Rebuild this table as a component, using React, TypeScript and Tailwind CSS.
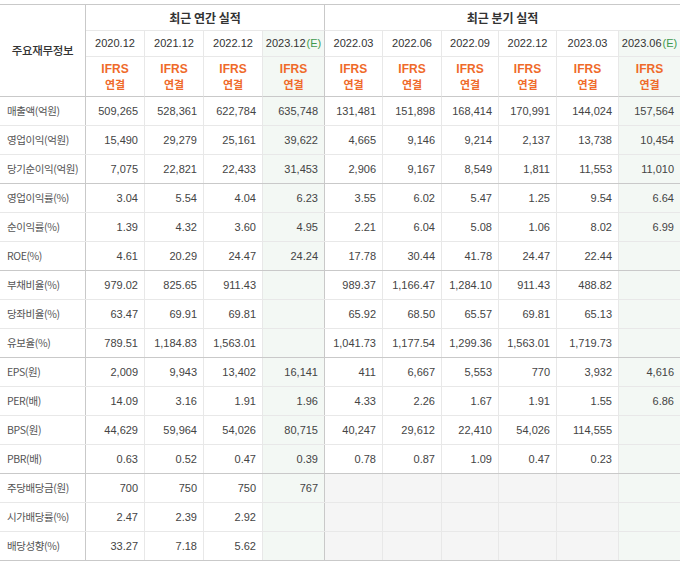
import React from "react";

const KR = "font-['Noto_Sans_CJK_KR',sans-serif]";
const NUM = "font-['Liberation_Sans','Noto_Sans_CJK_KR',sans-serif]";

// widths of the 11 columns (label + 4 annual + 6 quarterly)
const widths = [
  "w-[86px]",
  "w-[59px]",
  "w-[59px]",
  "w-[59px]",
  "w-[62px]",
  "w-[58px]",
  "w-[59px]",
  "w-[57px]",
  "w-[58px]",
  "w-[62px]",
  "w-[61px]",
];

const years = [
  "2020.12",
  "2021.12",
  "2022.12",
  "2023.12",
  "2022.03",
  "2022.06",
  "2022.09",
  "2022.12",
  "2023.03",
  "2023.06",
];

type Row = { label: string; values: string[]; groupEnd?: boolean; dividend?: boolean };

const rows: Row[] = [
  { label: "매출액(억원)", values: ["509,265", "528,361", "622,784", "635,748", "131,481", "151,898", "168,414", "170,991", "144,024", "157,564"] },
  { label: "영업이익(억원)", values: ["15,490", "29,279", "25,161", "39,622", "4,665", "9,146", "9,214", "2,137", "13,738", "10,454"] },
  { label: "당기순이익(억원)", values: ["7,075", "22,821", "22,433", "31,453", "2,906", "9,167", "8,549", "1,811", "11,553", "11,010"], groupEnd: true },
  { label: "영업이익률(%)", values: ["3.04", "5.54", "4.04", "6.23", "3.55", "6.02", "5.47", "1.25", "9.54", "6.64"] },
  { label: "순이익률(%)", values: ["1.39", "4.32", "3.60", "4.95", "2.21", "6.04", "5.08", "1.06", "8.02", "6.99"] },
  { label: "ROE(%)", values: ["4.61", "20.29", "24.47", "24.24", "17.78", "30.44", "41.78", "24.47", "22.44", ""], groupEnd: true },
  { label: "부채비율(%)", values: ["979.02", "825.65", "911.43", "", "989.37", "1,166.47", "1,284.10", "911.43", "488.82", ""] },
  { label: "당좌비율(%)", values: ["63.47", "69.91", "69.81", "", "65.92", "68.50", "65.57", "69.81", "65.13", ""] },
  { label: "유보율(%)", values: ["789.51", "1,184.83", "1,563.01", "", "1,041.73", "1,177.54", "1,299.36", "1,563.01", "1,719.73", ""], groupEnd: true },
  { label: "EPS(원)", values: ["2,009", "9,943", "13,402", "16,141", "411", "6,667", "5,553", "770", "3,932", "4,616"] },
  { label: "PER(배)", values: ["14.09", "3.16", "1.91", "1.96", "4.33", "2.26", "1.67", "1.91", "1.55", "6.86"] },
  { label: "BPS(원)", values: ["44,629", "59,964", "54,026", "80,715", "40,247", "29,612", "22,410", "54,026", "114,555", ""] },
  { label: "PBR(배)", values: ["0.63", "0.52", "0.47", "0.39", "0.78", "0.87", "1.09", "0.47", "0.23", ""], groupEnd: true },
  { label: "주당배당금(원)", values: ["700", "750", "750", "767", "", "", "", "", "", ""], dividend: true },
  { label: "시가배당률(%)", values: ["2.47", "2.39", "2.92", "", "", "", "", "", "", ""], dividend: true },
  { label: "배당성향(%)", values: ["33.27", "7.18", "5.62", "", "", "", "", "", "", ""], dividend: true, groupEnd: true },
];

// right border colour per column index (0..10)
const rightBorder = (i: number) => {
  if (i === 0 || i === 4) return "border-r border-r-[#c9c9c9]";
  if (i === 10) return "";
  return "border-r border-r-[#e8e8e8]";
};

const isEstimate = (i: number) => i === 4 || i === 10;

const App: React.FC = () => {
  return (
    <div className="w-[686px] h-[566px] bg-white pt-[4px]">
      <div className="w-[680px] border-t border-t-[#c9c9c9]">
        {/* Header */}
        <div className="grid grid-cols-[86px_59px_59px_59px_62px_58px_59px_57px_58px_62px_61px] grid-rows-[26px_26px_40px]">
          <div
            className={`row-span-3 col-start-1 row-start-1 flex items-center justify-center border-r border-r-[#c9c9c9] border-b border-b-[#c9c9c9] text-[11.5px] tracking-[-0.3px] text-[#333] font-medium whitespace-nowrap ${KR}`}
          >
            주요재무정보
          </div>
          <div
            className={`col-start-2 col-span-4 row-start-1 flex items-center justify-center border-r border-r-[#c9c9c9] border-b border-b-[#e8e8e8] text-[12px] text-[#333] font-bold ${KR}`}
          >
            최근 연간 실적
          </div>
          <div
            className={`col-start-6 col-span-6 row-start-1 flex items-center justify-center border-b border-b-[#e8e8e8] text-[12px] text-[#333] font-bold ${KR}`}
          >
            최근 분기 실적
          </div>
          {years.map((y, i) => (
            <div
              key={y + i}
              className={`row-start-2 flex items-center justify-center whitespace-nowrap border-b border-b-[#e8e8e8] ${rightBorder(i + 1)} ${
                isEstimate(i + 1) ? "bg-[#f3f8f4]" : "bg-white"
              } text-[11px] text-[#333] ${NUM}`}
            >
              {y}
              {isEstimate(i + 1) && <span className="text-[#3f9a4e] ml-[1px]">(E)</span>}
            </div>
          ))}
          {years.map((y, i) => (
            <div
              key={"ifrs" + y + i}
              className={`row-start-3 flex flex-col items-center justify-center border-b border-b-[#c9c9c9] ${rightBorder(i + 1)} ${
                isEstimate(i + 1) ? "bg-[#f3f8f4]" : "bg-white"
              } leading-[15px] font-bold text-[#ef6a2a]`}
            >
              <span className={`text-[12px] ${NUM}`}>IFRS</span>
              <span className={`text-[11px] ${KR}`}>연결</span>
            </div>
          ))}
        </div>

        {/* Body */}
        {rows.map((row) => (
          <div
            key={row.label}
            className={`flex h-[29px] border-b ${row.groupEnd ? "border-b-[#c9c9c9]" : "border-b-[#e8e8e8]"}`}
          >
            <div
              className={`${widths[0]} shrink-0 flex items-center pl-[7px] whitespace-nowrap ${rightBorder(0)} text-[10.5px] tracking-[-0.4px] text-[#555] ${KR}`}
            >
              {row.label}
            </div>
            {row.values.map((v, i) => {
              const col = i + 1;
              let bg = "bg-white";
              if (isEstimate(col)) bg = "bg-[#f3f8f4]";
              else if (row.dividend && col >= 5) bg = "bg-[#f5f5f5]";
              return (
                <div
                  key={col}
                  className={`${widths[col]} shrink-0 flex items-center justify-end pr-[6px] ${rightBorder(col)} ${bg} text-[11px] text-[#444] ${NUM}`}
                >
                  {v}
                </div>
              );
            })}
          </div>
        ))}
      </div>
    </div>
  );
};

export default App;
